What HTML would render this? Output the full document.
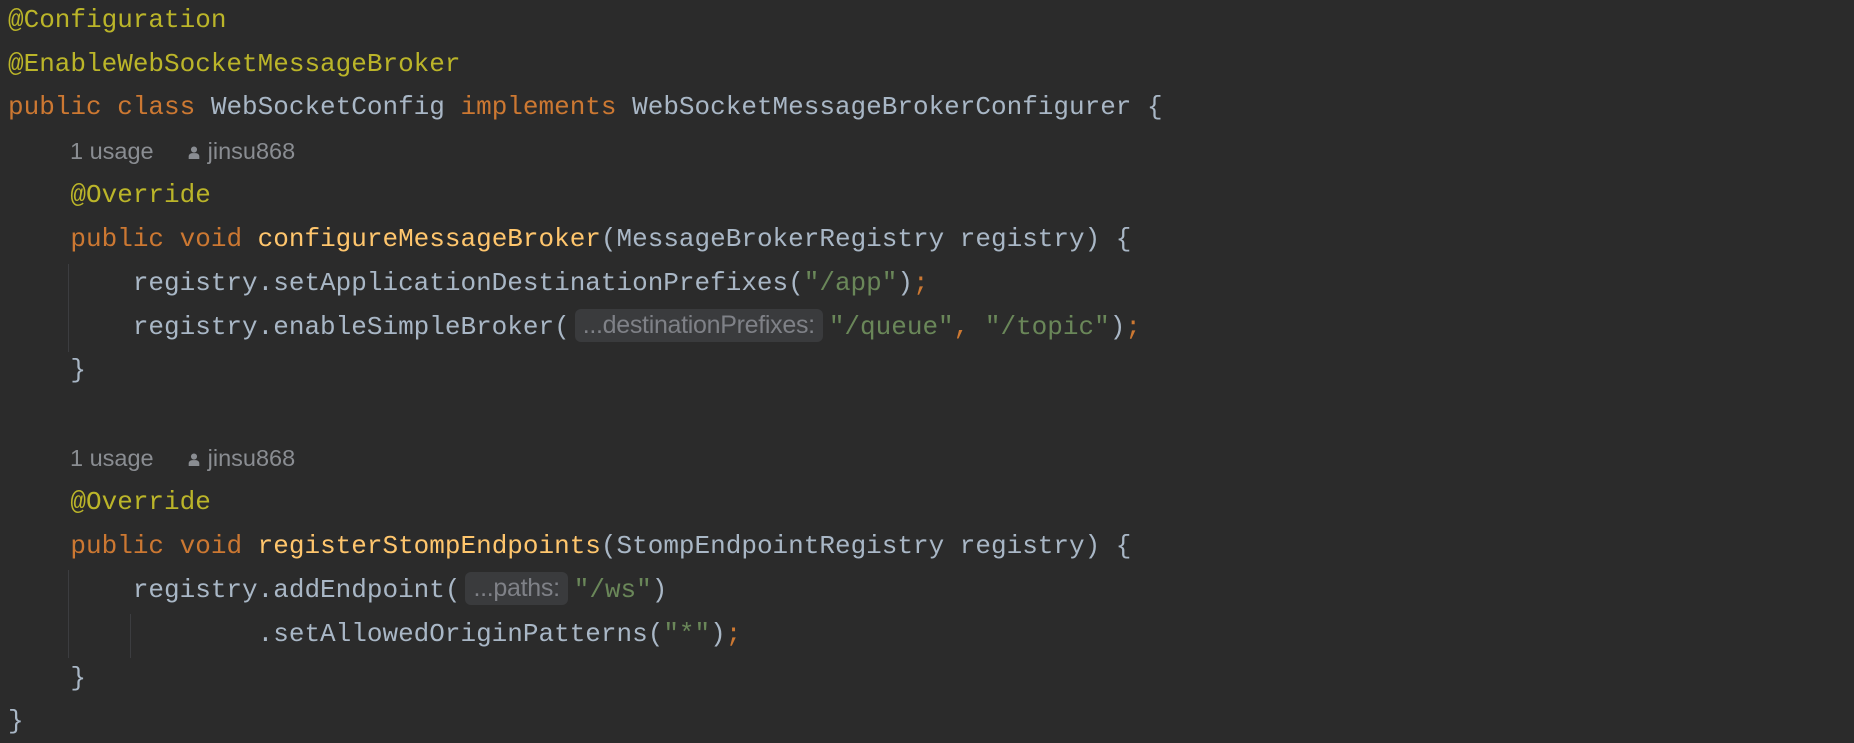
<!DOCTYPE html>
<html><head><meta charset="utf-8"><style>
body{margin:0;width:1854px;height:742px;background:#2b2b2b;overflow:hidden;position:relative}
.l{position:absolute;left:8px;height:44px;line-height:44px;font-family:"Liberation Mono",monospace;font-size:26px;color:#a9b7c6;white-space:pre}
.a{color:#bbb529}.k{color:#cc7832}.f{color:#ffc66d}.s{color:#6a8759}
.h{font-family:"Liberation Sans",sans-serif;font-size:23.5px;color:#8a8d92}
.b{display:inline-block;font-family:"Liberation Sans",sans-serif;font-size:25px;letter-spacing:-0.3px;color:#7f8187;background:#3a3b3d;border-radius:6px;line-height:33px;padding:0 8px;margin:0 6px 0 5px;vertical-align:1px}
.g{position:absolute;width:1px;background:#3c3d40}
</style></head><body>
<div class="g" style="left:68px;top:264px;height:88px"></div>
<div class="g" style="left:68px;top:570px;height:88px"></div>
<div class="g" style="left:130px;top:614px;height:44px"></div>
<div class="l" style="top:-2px"><span class="a">@Configuration</span></div>
<div class="l" style="top:42px"><span class="a">@EnableWebSocketMessageBroker</span></div>
<div class="l" style="top:85px"><span class="k">public class </span>WebSocketConfig <span class="k">implements </span>WebSocketMessageBrokerConfigurer {</div>
<div class="l" style="top:129px;left:70px"><span class="h">1 usage<svg viewBox="0 0 9 11" style="width:12px;height:13px;margin:0 8px 0 34px"><circle cx="4.5" cy="3" r="2.6" fill="#8a8d92"/><path d="M0 11v-2a3 3 0 0 1 3-3h3a3 3 0 0 1 3 3v2z" fill="#8a8d92"/></svg>jinsu868</span></div>
<div class="l" style="top:173px"><span class="a">    @Override</span></div>
<div class="l" style="top:217px">    <span class="k">public void </span><span class="f">configureMessageBroker</span>(MessageBrokerRegistry registry) {</div>
<div class="l" style="top:261px">        registry.setApplicationDestinationPrefixes(<span class="s">"/app"</span>)<span class="k">;</span></div>
<div class="l" style="top:305px">        registry.enableSimpleBroker(<span class="b">...destinationPrefixes:</span><span class="s">"/queue"</span><span class="k">, </span><span class="s">"/topic"</span>)<span class="k">;</span></div>
<div class="l" style="top:348px">    }</div>
<div class="l" style="top:436px;left:70px"><span class="h">1 usage<svg viewBox="0 0 9 11" style="width:12px;height:13px;margin:0 8px 0 34px"><circle cx="4.5" cy="3" r="2.6" fill="#8a8d92"/><path d="M0 11v-2a3 3 0 0 1 3-3h3a3 3 0 0 1 3 3v2z" fill="#8a8d92"/></svg>jinsu868</span></div>
<div class="l" style="top:480px"><span class="a">    @Override</span></div>
<div class="l" style="top:524px">    <span class="k">public void </span><span class="f">registerStompEndpoints</span>(StompEndpointRegistry registry) {</div>
<div class="l" style="top:568px">        registry.addEndpoint(<span class="b">...paths:</span><span class="s">"/ws"</span>)</div>
<div class="l" style="top:612px">                .setAllowedOriginPatterns(<span class="s">"*"</span>)<span class="k">;</span></div>
<div class="l" style="top:656px">    }</div>
<div class="l" style="top:699px">}</div>
</body></html>
